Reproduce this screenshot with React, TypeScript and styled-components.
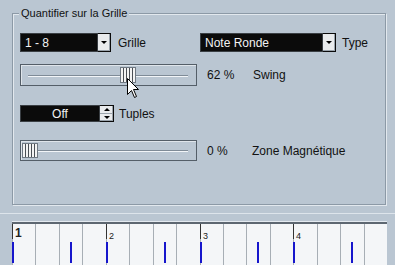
import styled, { createGlobalStyle } from "styled-components";

const GlobalStyle = createGlobalStyle`
  html, body { margin: 0; padding: 0; }
  body {
    background: #bac6d2;
    font-family: "Liberation Sans", Arial, sans-serif;
    font-size: 12px;
    color: #111;
  }
`;

const BEAT = 375 / 16;
const EIGHTH = BEAT * 2;
const SWING = 11;

const Page = styled.div`
  position: relative;
  width: 395px;
  height: 265px;
  overflow: hidden;
  display: flex;
  flex-direction: column;
`;

const Group = styled.div`
  position: relative;
  margin: 13px 0 0 12px;
  width: 374px;
  height: 192px;
  flex: none;
  box-sizing: border-box;
  border: 1px solid #8c99a6;
  box-shadow: inset 1px 1px 0 #e2e8ee, 1px 1px 0 #e2e8ee;
  padding: 19px 0 0 7px;
  display: flex;
  flex-direction: column;
`;

const Legend = styled.span`
  position: absolute;
  top: -8px;
  left: 6px;
  padding: 0 2px;
  font-size: 11px;
  line-height: 14px;
  background: #bac6d2;
`;

const Row = styled.div<{ $top?: number }>`
  display: flex;
  align-items: center;
  margin-top: ${(p) => p.$top ?? 0}px;
`;

const Cell = styled.div<{ $width?: number }>`
  display: flex;
  align-items: center;
  width: ${(p) => (p.$width ? `${p.$width}px` : "auto")};
`;

const Label = styled.span<{ $gap?: number }>`
  margin-left: ${(p) => p.$gap ?? 7}px;
  white-space: nowrap;
`;

const Value = styled.span`
  width: 46px;
  margin-left: 10px;
`;

const Field = styled.div<{ $width: number; $center?: boolean }>`
  display: flex;
  align-items: center;
  justify-content: ${(p) => (p.$center ? "center" : "flex-start")};
  width: ${(p) => p.$width}px;
  height: 100%;
  box-sizing: border-box;
  padding-left: ${(p) => (p.$center ? 0 : 4)}px;
  background: #0b0b0b;
  color: #f2f2f2;
  border: 1px solid #3a3f44;
`;

const Combo = styled.div<{ $height: number }>`
  display: flex;
  align-items: stretch;
  height: ${(p) => p.$height}px;
`;

const DropButton = styled.div`
  width: 12px;
  display: flex;
  align-items: center;
  justify-content: center;
  background: #e9ebed;
  border: 1px solid #0b0b0b;
  border-left: none;
  box-shadow: inset -1px -1px 0 #9aa3ac;
  &::after {
    content: "";
    border-left: 3px solid transparent;
    border-right: 3px solid transparent;
    border-top: 3px solid #000;
  }
`;

const SpinStack = styled.div`
  width: 13px;
  display: flex;
  flex-direction: column;
  border: 1px solid #0b0b0b;
  border-left: none;
`;

const SpinHalf = styled.div<{ $up?: boolean }>`
  flex: 1;
  display: flex;
  align-items: center;
  justify-content: center;
  background: #e9ebed;
  box-shadow: inset -1px -1px 0 #9aa3ac;
  &::after {
    content: "";
    border-left: 3px solid transparent;
    border-right: 3px solid transparent;
    ${(p) => (p.$up ? "border-bottom: 3px solid #000;" : "border-top: 3px solid #000;")}
  }
`;

const SliderFrame = styled.div<{ $height: number }>`
  position: relative;
  width: 177px;
  height: ${(p) => p.$height}px;
  box-sizing: border-box;
  border: 1px solid #545e68;
  box-shadow: inset 1px 1px 0 #dfe5eb;
  display: flex;
  align-items: center;
  padding: 0 8px 0 7px;
`;

const Track = styled.div`
  flex: 1;
  height: 1px;
  background: #7f8b97;
  box-shadow: 0 1px 0 #f2f5f8;
`;

const Thumb = styled.div`
  position: absolute;
  top: 2px;
  bottom: 2px;
  width: 16px;
  box-sizing: border-box;
  border: 1px solid #6f7882;
  background: repeating-linear-gradient(
    90deg,
    #f4f4f4 0px,
    #f4f4f4 2px,
    #4a4f55 2px,
    #4a4f55 3px
  );
`;

const Divider = styled.div`
  margin-top: 8px;
  height: 1px;
  flex: none;
  background: #dde4eb;
`;

const Ruler = styled.div`
  position: relative;
  margin: 8px 0 0 12px;
  width: 375px;
  flex: 1;
  background: #f4f6f8;
  border-top: 2px solid #5d6771;
  box-shadow: 0 -1px 0 #e4eaf0;
`;

const BeatLine = styled.div<{ $bar: boolean }>`
  position: absolute;
  top: 0;
  bottom: 0;
  width: 1px;
  background: ${(p) => (p.$bar ? "linear-gradient(#333 0 15px, #a7aeb5 15px)" : "#a7aeb5")};
`;

const BarNumber = styled.span<{ $first: boolean }>`
  position: absolute;
  top: ${(p) => (p.$first ? 2 : 7)}px;
  font-size: ${(p) => (p.$first ? 12 : 9)}px;
  font-weight: ${(p) => (p.$first ? "bold" : "normal")};
  color: #222;
`;

const Tick = styled.div`
  position: absolute;
  top: 18px;
  height: 21px;
  width: 2px;
  background: #1616cc;
`;

const Cursor = styled.svg`
  position: absolute;
  left: 127px;
  top: 78px;
`;

function Slider({ value, height }: { value: number; height: number }) {
  const left = 1 + (value / 100) * 158;
  return (
    <SliderFrame $height={height}>
      <Track />
      <Thumb style={{ left }} />
    </SliderFrame>
  );
}

export default function App() {
  const beats = Array.from({ length: 16 }, (_, i) => i);
  const ticks = Array.from({ length: 8 }, (_, k) => Math.round(k * EIGHTH + (k % 2 ? SWING : 0)));

  return (
    <Page>
      <GlobalStyle />
      <Group>
        <Legend>Quantifier sur la Grille</Legend>
        <Row>
          <Cell $width={180}>
            <Combo $height={19}>
              <Field $width={78}>1 - 8</Field>
              <DropButton />
            </Combo>
            <Label>Grille</Label>
          </Cell>
          <Cell>
            <Combo $height={19}>
              <Field $width={123}>Note Ronde</Field>
              <DropButton />
            </Combo>
            <Label $gap={6}>Type</Label>
          </Cell>
        </Row>
        <Row $top={12}>
          <Slider value={62} height={22} />
          <Value>62 %</Value>
          <Label $gap={0}>Swing</Label>
        </Row>
        <Row $top={19}>
          <Combo $height={17}>
            <Field $width={80} $center>
              Off
            </Field>
            <SpinStack>
              <SpinHalf $up />
              <SpinHalf />
            </SpinStack>
          </Combo>
          <Label $gap={5}>Tuples</Label>
        </Row>
        <Row $top={18}>
          <Slider value={0} height={21} />
          <Value>0 %</Value>
          <Label $gap={-1}>Zone Magnétique</Label>
        </Row>
      </Group>
      <Divider />
      <Ruler>
        {beats.map((i) => (
          <BeatLine key={i} $bar={i % 4 === 0} style={{ left: Math.round(i * BEAT) }} />
        ))}
        {[0, 1, 2, 3].map((b) => (
          <BarNumber key={b} $first={b === 0} style={{ left: Math.round(b * 4 * BEAT) + 3 }}>
            {b + 1}
          </BarNumber>
        ))}
        {ticks.map((x, i) => (
          <Tick key={i} style={{ left: x }} />
        ))}
      </Ruler>
      <Cursor width="13" height="21" viewBox="0 0 13 21">
        <path d="M0.5 0.5 L0.5 16.5 L4.5 12.5 L7.5 19.5 L9.5 18.5 L6.5 11.5 L11.5 11.5 Z" fill="#fff" stroke="#000" strokeWidth="1" />
      </Cursor>
    </Page>
  );
}
